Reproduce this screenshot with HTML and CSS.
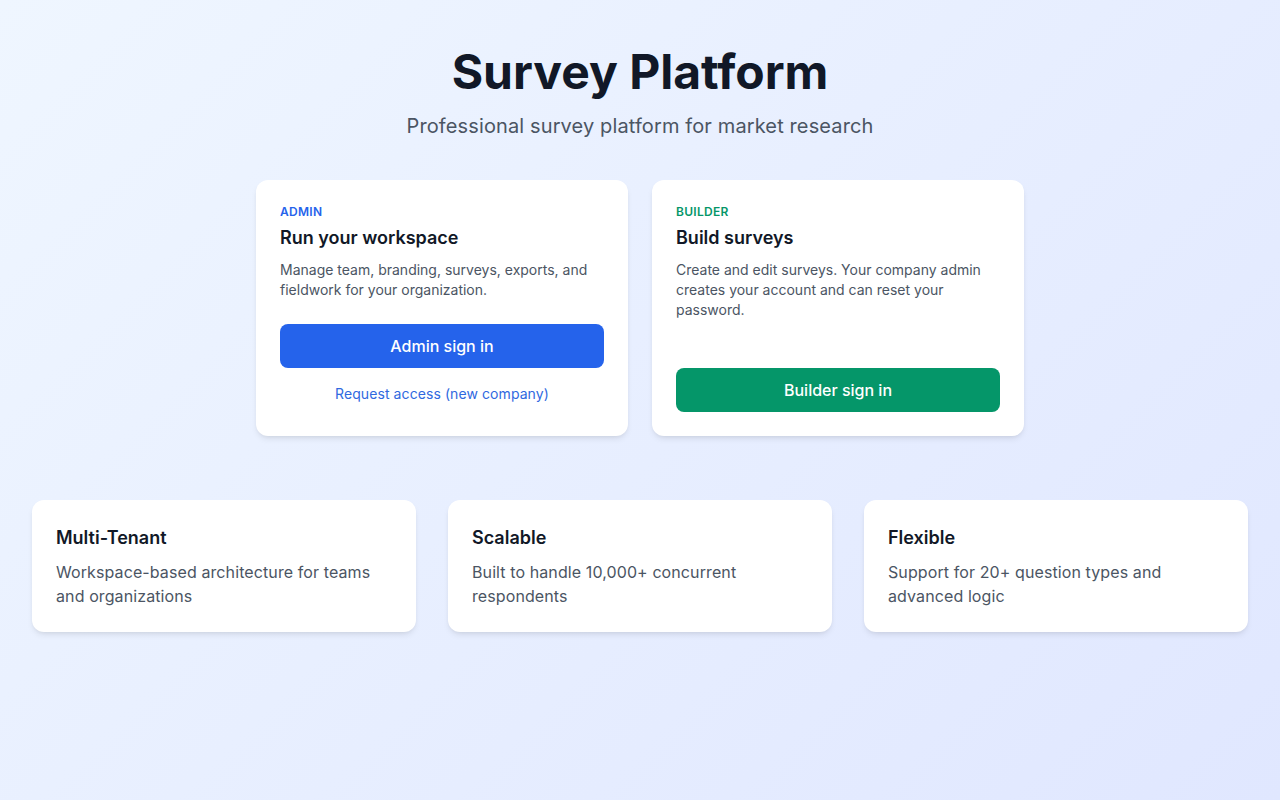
FILE: index.html
```html
<!DOCTYPE html>
<html>
<head>
    <title>Survey Platform</title>
    <link rel="stylesheet" href="styles.css">
</head>
<body>
    <div class="page">
        <header class="hero">
            <h1>Survey Platform</h1>
            <p class="subtitle">Professional survey platform for market research</p>
        </header>

        <div class="roles">
            <div class="card role-card">
                <div class="role-label admin">Admin</div>
                <h2>Run your workspace</h2>
                <p class="role-text">Manage team, branding, surveys, exports, and fieldwork for your organization.</p>
                <button class="btn btn-admin">Admin sign in</button>
                <a class="request-link" href="#">Request access (new company)</a>
            </div>
            <div class="card role-card">
                <div class="role-label builder">Builder</div>
                <h2>Build surveys</h2>
                <p class="role-text">Create and edit surveys. Your company admin creates your account and can reset your password.</p>
                <button class="btn btn-builder">Builder sign in</button>
            </div>
        </div>

        <div class="features">
            <div class="card feature-card">
                <h3>Multi-Tenant</h3>
                <p>Workspace-based architecture for teams and organizations</p>
            </div>
            <div class="card feature-card">
                <h3>Scalable</h3>
                <p>Built to handle 10,000+ concurrent respondents</p>
            </div>
            <div class="card feature-card">
                <h3>Flexible</h3>
                <p>Support for 20+ question types and advanced logic</p>
            </div>
        </div>
    </div>
</body>
</html>
```

FILE: styles.css
```css
* {
    box-sizing: border-box;
}

html, body {
    margin: 0;
    padding: 0;
    min-height: 100%;
}

body {
    font-family: Inter, "Noto Sans", Arial, sans-serif;
    background: linear-gradient(135deg, #eff6ff 0%, #e0e7ff 100%);
    min-height: 100vh;
    color: #111827;
}

.page {
    max-width: 1280px;
    margin: 0 auto;
    padding: 48px 32px;
}

.hero {
    text-align: center;
    margin-bottom: 40px;
}

.hero h1 {
    font-size: 48px;
    line-height: 48px;
    font-weight: 700;
    color: #111827;
    margin: 0 0 16px;
}

.subtitle {
    font-size: 20px;
    line-height: 28px;
    color: #4b5563;
    letter-spacing: 0.12px;
    margin: 0;
}

.card {
    background-color: #fff;
    border-radius: 12px;
    box-shadow: 0 4px 6px -1px rgba(0, 0, 0, 0.08), 0 2px 4px -2px rgba(0, 0, 0, 0.08);
    padding: 24px;
}

.roles {
    display: grid;
    grid-template-columns: 1fr 1fr;
    gap: 24px;
    max-width: 768px;
    margin: 0 auto;
}

.role-card {
    display: flex;
    flex-direction: column;
}

.role-label {
    font-size: 12px;
    line-height: 16px;
    font-weight: 600;
    text-transform: uppercase;
    letter-spacing: 0.025em;
}

.role-label.admin {
    color: #2563eb;
}

.role-label.builder {
    color: #059669;
}

.role-card h2 {
    font-size: 18px;
    line-height: 28px;
    font-weight: 600;
    margin: 4px 0 0;
    color: #111827;
}

.role-text {
    font-size: 14px;
    line-height: 20px;
    color: #4b5563;
    margin: 8px 0 24px;
}

.btn {
    margin-top: auto;
    display: block;
    width: 100%;
    border: none;
    border-radius: 8px;
    padding: 10px 16px;
    font-family: inherit;
    font-size: 16px;
    line-height: 24px;
    font-weight: 500;
    color: #fff;
    cursor: pointer;
}

.btn-admin {
    background-color: #2563eb;
}

.btn-builder {
    background-color: #059669;
}

.request-link {
    display: block;
    text-align: center;
    margin-top: 16px;
    padding-bottom: 8px;
    font-size: 14px;
    line-height: 20px;
    letter-spacing: 0.08px;
    color: #3069e0;
    text-decoration: none;
}

.features {
    display: grid;
    grid-template-columns: repeat(3, 1fr);
    gap: 32px;
    margin-top: 64px;
}

.feature-card h3 {
    font-size: 18px;
    line-height: 28px;
    font-weight: 600;
    margin: 0;
    color: #111827;
}

.feature-card p {
    font-size: 16px;
    line-height: 24px;
    color: #4b5563;
    letter-spacing: 0.1px;
    margin: 8px 0 0;
}
```
